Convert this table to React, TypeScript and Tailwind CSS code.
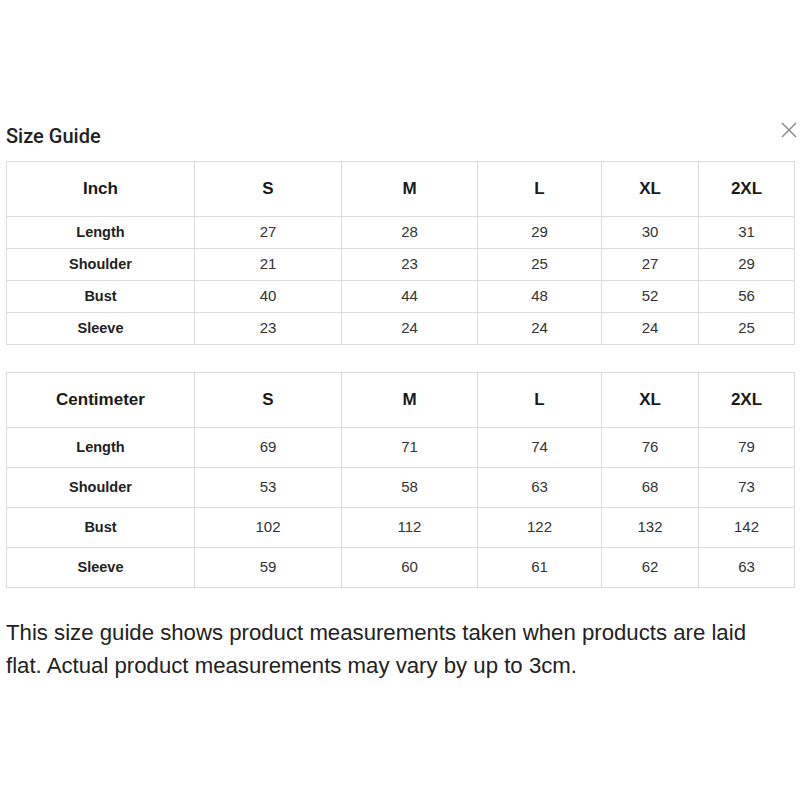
import React from "react";

const sizes = ["S", "M", "L", "XL", "2XL"];

const inchRows: [string, string[]][] = [
  ["Length", ["27", "28", "29", "30", "31"]],
  ["Shoulder", ["21", "23", "25", "27", "29"]],
  ["Bust", ["40", "44", "48", "52", "56"]],
  ["Sleeve", ["23", "24", "24", "24", "25"]],
];

const cmRows: [string, string[]][] = [
  ["Length", ["69", "71", "74", "76", "79"]],
  ["Shoulder", ["53", "58", "63", "68", "73"]],
  ["Bust", ["102", "112", "122", "132", "142"]],
  ["Sleeve", ["59", "60", "61", "62", "63"]],
];

function SizeTable({
  unit,
  rows,
  rowH,
}: {
  unit: string;
  rows: [string, string[]][];
  rowH: "h-[32px]" | "h-[40px]";
}) {
  return (
    <div className="grid w-[789px] grid-cols-[188px_147px_136px_124px_97px_96px] border-l border-t border-[#dcdcdc] font-['Liberation_Sans',Arial,sans-serif]">
      <div className="flex h-[55px] items-center justify-center border-b border-r border-[#dcdcdc] text-[17px] font-bold text-[#1a1a1a]">
        {unit}
      </div>
      {sizes.map((s) => (
        <div
          key={s}
          className="flex h-[55px] items-center justify-center border-b border-r border-[#dcdcdc] text-[17px] font-bold text-[#1a1a1a]"
        >
          {s}
        </div>
      ))}
      {rows.map(([label, vals]) => (
        <React.Fragment key={label}>
          <div
            className={`flex ${rowH} items-center justify-center border-b border-r border-[#dcdcdc] text-[14.5px] font-bold text-[#222]`}
          >
            {label}
          </div>
          {vals.map((v, i) => (
            <div
              key={i}
              className={`flex ${rowH} items-center justify-center border-b border-r border-[#dcdcdc] text-[15px] text-[#333]`}
            >
              {v}
            </div>
          ))}
        </React.Fragment>
      ))}
    </div>
  );
}

export default function App() {
  return (
    <div className="min-h-[800px] w-[800px] bg-white px-[6px] pt-[122px]">
      <div className="-mr-[3px] flex items-start justify-between">
        <h2 className="font-['Roboto',sans-serif] text-[20px] font-medium leading-[28px] text-[#222]">
          Size Guide
        </h2>
        <button className="h-[16px] w-[16px] text-[#8a8a8a]" aria-label="Close">
          <svg viewBox="0 0 16 16" width="16" height="16" fill="none" stroke="currentColor" strokeWidth="1.4">
            <line x1="1" y1="1" x2="15" y2="15" />
            <line x1="15" y1="1" x2="1" y2="15" />
          </svg>
        </button>
      </div>
      <div className="mt-[11px]">
        <SizeTable unit="Inch" rows={inchRows} rowH="h-[32px]" />
      </div>
      <div className="mt-[27px]">
        <SizeTable unit="Centimeter" rows={cmRows} rowH="h-[40px]" />
      </div>
      <p className="mt-[28px] max-w-[780px] font-['Liberation_Sans',Arial,sans-serif] text-[22.2px] leading-[33px] text-[#222]">
        This size guide shows product measurements taken when products are laid flat. Actual product measurements may vary by up to 3cm.
      </p>
    </div>
  );
}
